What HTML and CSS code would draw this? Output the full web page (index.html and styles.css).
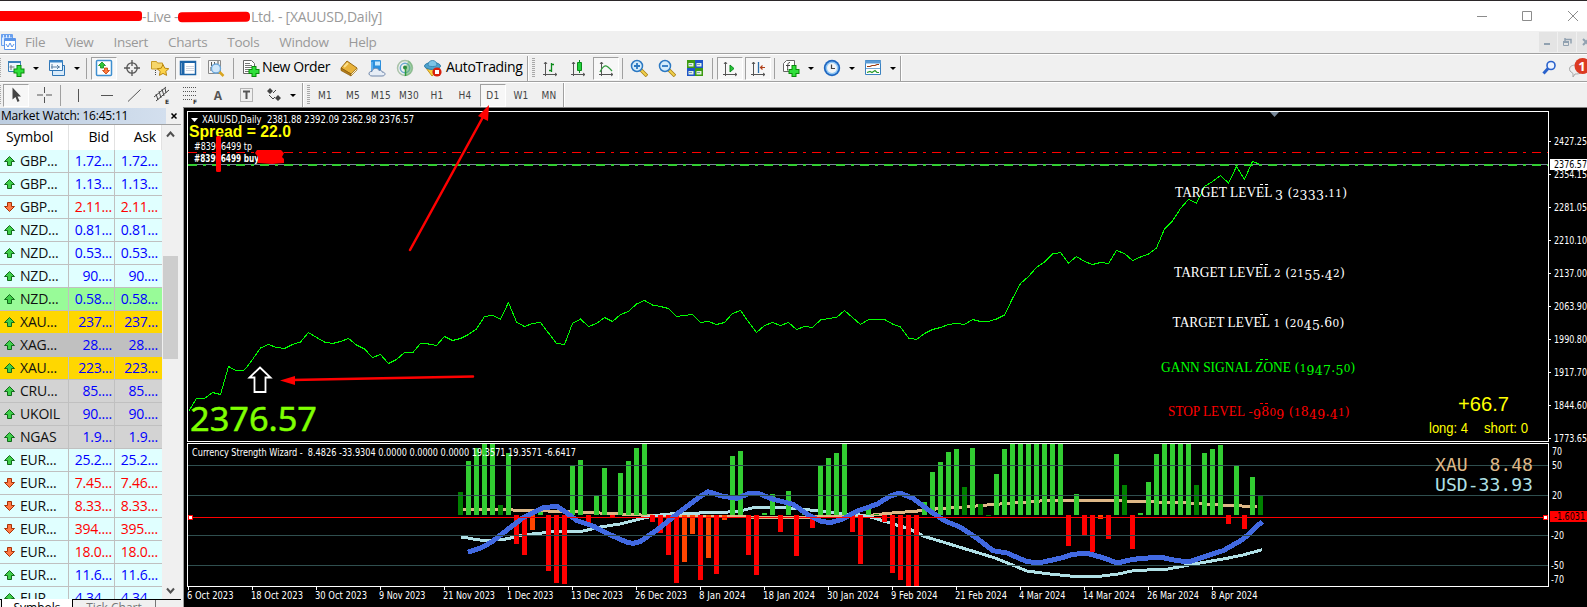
FILE: index.html
```html
<!DOCTYPE html>
<html lang="en">
<head>
    <meta charset="UTF-8">
    <title>XAUUSD,Daily</title>
    <link rel="stylesheet" href="styles.css">
</head>
<body>

    <div class="titlebar">
        <span class="scribble scribble-a"></span>
        <span class="title-live">-Live -</span>
        <span class="scribble scribble-b"></span>
        <span class="title-rest">Ltd. - [XAUUSD,Daily]</span>
        <svg class="win-buttons" width="105" height="20">
            <path d="M2 10.500h10M47.500 5.500h9v9h-9zM93 5l10 10M103 5l-10 10" fill="none" stroke="#8c8c8c"/>
        </svg>
    </div>

    <div class="menubar">
        <svg class="app-icon" width="17" height="18">
            <path d="M1.500 1.500h11v11h-11z" fill="#dcecff" stroke="#6aa0ee"/>
            <path d="M1 3h12" stroke="#6aa0ee" stroke-width="3" stroke-dasharray="2 1"/>
            <path d="M4.500 5.500h11v11h-11z" fill="#fff" stroke="#5b95ea"/>
            <path d="M4 7h12" stroke="#5b95ea" stroke-width="2"/>
            <path d="M6 11l2 3 2-4 2 4 2-3" fill="none" stroke="#5b95ea"/>
        </svg>
        <span>File</span><span>View</span><span>Insert</span><span>Charts</span><span>Tools</span><span>Window</span><span>Help</span>
        <div class="mdi">
            <svg width="18" height="20"><path d="M5 12h6" stroke="#91a1b0" stroke-width="2"/></svg>
            <svg width="18" height="20"><path d="M7 7.500h6v4M7 6v3" stroke="#91a1b0" fill="none" stroke-width="1.500"/><path d="M5.500 9.500h5v4h-5z" stroke="#91a1b0" fill="none"/><path d="M5 10h6" stroke="#91a1b0" stroke-width="2"/></svg>
            <svg width="18" height="20"><path d="M6 7l6 6M12 7l-6 6" stroke="#91a1b0" stroke-width="2"/></svg>
        </div>
    </div>

    <div class="toolbar toolbar-main">
        <i class="grip half"></i>
        <svg class="ic" viewBox="0 0 18 18">
            <path d="M1.500 2.500h12v10h-12z" fill="#eef6fd" stroke="#3a7fb8"/><path d="M1 3h13" stroke="#3a7fb8" stroke-width="2"/>
            <path d="M4 6v5M2.500 8h5" stroke="#777"/>
            <path d="M12 6v12M6.500 12h11" stroke="#0a8a0a" stroke-width="5"/><path d="M12 7v10M7.500 12h9" stroke="#2fe03a" stroke-width="3"/>
        </svg><b class="dd"></b>
        <svg class="ic" viewBox="0 0 18 18">
            <path d="M4.500 6.500h12v10h-12z" fill="#d9ebfa" stroke="#2f75b5"/>
            <path d="M1.500 1.500h13v10h-13z" fill="#f3f9fe" stroke="#2f75b5"/><path d="M1 2.500h14" stroke="#3a86c8" stroke-width="2"/>
            <path d="M4 5v5M3 8h9M9 6l2 2-2 2" fill="none" stroke="#5a7f9f"/>
        </svg><b class="dd"></b>
        <i class="sep first"></i>
        <span class="btn on"><svg class="ic" viewBox="0 0 18 18">
            <rect x="1.500" y="1.500" width="15" height="15" rx="1" fill="#fff" stroke="#3e8fd0" stroke-width="1.500"/>
            <path d="M7 3l3.500 3.500H8.500V9h-3V6.500H3.500z" fill="#2fc83a" stroke="#128a18" stroke-width=".8"/>
            <path d="M11 15l-3.500-3.500H9.500V9h3v2.500h2z" fill="#ff7a3c" stroke="#c43c08" stroke-width=".8"/>
        </svg></span>
        <span class="btn"><svg class="ic" viewBox="0 0 18 18">
            <circle cx="9" cy="9" r="5.200" fill="none" stroke="#555" stroke-width="1.300"/><path d="M9 1v6M9 11v6M1 9h6M11 9h6" stroke="#555" stroke-width="1.300"/>
        </svg></span>
        <span class="btn"><svg class="ic" viewBox="0 0 18 18">
            <path d="M.5 2.500h5l1 1.500h5v6H.5z" fill="#f6d66b" stroke="#c79a26"/><path d="M4.500 11v6" stroke="#444" stroke-dasharray="1 1"/>
            <path d="M12 5.500l1.800 3.700 4 .5-3 2.700.8 4-3.600-2-3.600 2 .8-4-3-2.700 4-.5z" fill="#fcd34a" stroke="#b9860f"/>
        </svg></span>
        <span class="btn on"><svg class="ic" viewBox="0 0 18 18">
            <rect x="1.500" y="2.500" width="15" height="13" fill="#fff" stroke="#1c64a8" stroke-width="1.500"/><path d="M2 3h14" stroke="#1c64a8" stroke-width="2"/>
            <path d="M4 4v11" stroke="#1c64a8" stroke-width="3"/><path d="M7 7.500h8M7 9.500h8M7 11.500h8" stroke="#c3cad8" stroke-width=".8"/>
        </svg></span>
        <span class="btn"><svg class="ic" viewBox="0 0 18 18">
            <path d="M1.500 1.500h12v13h-12z" fill="#f6f6f6" stroke="#8a8a8a"/><path d="M4.500 3v4M7.500 3v3M11 2v3M4 8v4" stroke="#555"/>
            <circle cx="9" cy="9.500" r="4.500" fill="#cfe6fa" stroke="#6aa5d8" stroke-width="1.300"/><path d="M12.500 13l4 4" stroke="#d9a520" stroke-width="2.500"/>
        </svg></span>
        <i class="sep wide"></i>
        <svg class="ic" viewBox="0 0 18 18">
            <path d="M1.500 1.500h8l3 3v10h-11z" fill="#fff" stroke="#666"/><path d="M3 4.500h5M3 6.500h7M3 8.500h7M3 10.500h4M3 12.500h4" stroke="#777"/>
            <path d="M12 7v11M6.500 12.500h11" stroke="#0a8a0a" stroke-width="5"/><path d="M12 8v9M7.500 12.500h9" stroke="#2fe03a" stroke-width="3"/>
        </svg>
        <span class="label label-order">New Order</span>
        <span class="btn"><svg class="ic" viewBox="0 0 18 18">
            <path d="M1 9l6-7 10 7-6 6z" fill="#e8b23a" stroke="#9a6a12"/><path d="M1 9l10 6v2L1 11.500z" fill="#b47d18" stroke="#8a5a0a" stroke-width=".7"/><path d="M11 15l6-6v2l-6 6z" fill="#fff3c8" stroke="#9a6a12" stroke-width=".7"/><path d="M4 8l4-4" stroke="#fbe08b" stroke-width="2"/>
        </svg></span>
        <span class="btn"><svg class="ic" viewBox="0 0 18 18">
            <rect x="3" y="1" width="10" height="11" rx="1" fill="#2d8fdc"/><path d="M7 2.500h5v4H7z" fill="#c6e9ff"/><path d="M4 3v8" stroke="#8fd0ff"/>
            <path d="M4 17c-4 0-4-5 0-4.500.5-4 6-4 7-1 2-1 3 .5 3 1.500 4 0 4 4 0 4z" fill="#e6edf6" stroke="#6f86aa"/>
        </svg></span>
        <span class="btn"><svg class="ic" viewBox="0 0 18 18">
            <circle cx="9" cy="9" r="7.500" fill="none" stroke="#a9c3a9" stroke-width="1.500"/><circle cx="9" cy="9" r="4.700" fill="none" stroke="#6aaad0" stroke-width="1.500"/>
            <path d="M9 9l.5 8c4-.5 7-4 7-8.500 0-3-2-6-4-7" fill="#5fb36a" opacity=".55"/><circle cx="9" cy="8.500" r="2" fill="#2b8a3c"/><path d="M9.500 9v8" stroke="#2f9a3c" stroke-width="1.500"/>
        </svg></span>
        <svg class="ic" viewBox="0 0 18 18">
            <path d="M2 9l6 8 8-7z" fill="#f5cf45" stroke="#c89318"/><ellipse cx="8.500" cy="7" rx="8" ry="3.500" fill="#4ea3cf" stroke="#2f7da8"/><path d="M4 6c0-6 9-6 9 0 0 2-9 2-9 0z" fill="#7cc4e6" stroke="#2f7da8" stroke-width=".8"/>
            <circle cx="13" cy="13" r="4.600" fill="#d8200c"/><path d="M11 11h4v4h-4z" fill="#fff"/>
        </svg>
        <span class="label label-auto">AutoTrading</span>
        <i class="end"></i><i class="grip"></i>
        <span class="btn"><svg class="ic" viewBox="0 0 18 18"><path d="M4.500 3v14M2 15.500h14M3 5l1.500-2L6 5M14 14l2 1.500-2 1.500" fill="none" stroke="#555"/><path d="M10.500 4v9M10 11.500H8M11 5.500h2" stroke="#0a8a1a" stroke-width="1.300"/></svg></span>
        <span class="btn"><svg class="ic" viewBox="0 0 18 18"><path d="M4.500 3v14M2 15.500h14M3 5l1.500-2L6 5M14 14l2 1.500-2 1.500" fill="none" stroke="#555"/><path d="M10.500 1v13" stroke="#0a8a1a"/><path d="M8.500 3.500h4v8h-4z" fill="#22d03a" stroke="#0a8a1a"/></svg></span>
        <span class="btn on"><svg class="ic" viewBox="0 0 18 18"><path d="M4.500 3v14M2 15.500h14M3 5l1.500-2L6 5M14 14l2 1.500-2 1.500" fill="none" stroke="#555"/><path d="M3 13c4-8 6-8 12-1" fill="none" stroke="#2e9a3a" stroke-width="1.200"/></svg></span>
        <i class="sep"></i>
        <span class="btn"><svg class="ic" viewBox="0 0 18 18"><path d="M11 11l6 6" stroke="#a77f14" stroke-width="3.500"/><path d="M11 11l5.500 5.500" stroke="#f0d04c" stroke-width="2"/><circle cx="7" cy="7" r="5.500" fill="#d4ecfb" stroke="#2b78c2" stroke-width="1.500"/><path d="M4 7h6M7 4v6" stroke="#2b78c2" stroke-width="1.800"/></svg></span>
        <span class="btn"><svg class="ic" viewBox="0 0 18 18"><path d="M11 11l6 6" stroke="#a77f14" stroke-width="3.500"/><path d="M11 11l5.500 5.500" stroke="#f0d04c" stroke-width="2"/><circle cx="7" cy="7" r="5.500" fill="#d4ecfb" stroke="#2b78c2" stroke-width="1.500"/><path d="M4 7h6" stroke="#2b78c2" stroke-width="1.800"/></svg></span>
        <span class="btn"><svg class="ic" viewBox="0 0 18 18"><path d="M1 1h8v8H1zM9 9h8v8H9z" fill="#3c9a12"/><path d="M9 1h8v8H9zM1 9h8v8H1z" fill="#1f55c8"/><path d="M2.500 4h5v3.500h-5zM10.500 4h5v3.500h-5zM2.500 12h5v3.500h-5zM10.500 12h5v3.500h-5z" fill="#e4f2e0"/><path d="M3 5.500h3M11 5.500h3M3 13.500h3M11 13.500h3" stroke="#7b9cc0"/></svg></span>
        <i class="sep wide"></i>
        <span class="btn on"><svg class="ic" viewBox="0 0 18 18"><path d="M4.500 3v14M2 15.500h14M3 5l1.500-2L6 5M14 14l2 1.500-2 1.500" fill="none" stroke="#555"/><path d="M9 6l4 3.500L9 13z" fill="#28c83a" stroke="#0a8a1a"/></svg></span>
        <span class="btn on"><svg class="ic" viewBox="0 0 18 18"><path d="M4.500 3v14M2 15.500h14M3 5l1.500-2L6 5M14 14l2 1.500-2 1.500" fill="none" stroke="#555"/><path d="M9.500 3v11" stroke="#2b6ca8" stroke-width="1.300"/><path d="M11 8.500h5M13.500 6.500L11.500 8.500l2 2" fill="none" stroke="#b0401a" stroke-width="1.200"/></svg></span>
        <i class="sep"></i>
        <svg class="ic" viewBox="0 0 18 18">
            <path d="M4.500 1.500h8v11h-11v-8z" fill="#fff" stroke="#666"/><path d="M8 3.500c-3 0-2 3-2.500 8M4 6.500h4" fill="none" stroke="#444"/>
            <path d="M12 6v12M6.500 12.500h11" stroke="#0a8a0a" stroke-width="5"/><path d="M12 7v10M7.500 12.500h9" stroke="#2fe03a" stroke-width="3"/>
        </svg><b class="dd"></b>
        <svg class="ic" viewBox="0 0 18 18">
            <circle cx="9" cy="9" r="8.200" fill="#1e66c0"/><circle cx="9" cy="9" r="6.500" fill="#8ec6f4"/><circle cx="9" cy="9" r="5" fill="#f2f4f6"/><path d="M8.500 5.500V9.500H12" fill="none" stroke="#444" stroke-width="1.200"/>
        </svg><b class="dd"></b>
        <svg class="ic" viewBox="0 0 18 18">
            <path d="M1.500 1.500h15v14h-15z" fill="#fff" stroke="#3c82c0"/><path d="M1 3h16" stroke="#5a9ad4" stroke-width="3"/><path d="M2 9.500h14" stroke="#3c82c0" stroke-width=".7"/>
            <path d="M3 7.500h3l2-1h3l2-1h2" fill="none" stroke="#9a3a10" stroke-width="1.200"/><path d="M3 13.500l3-1 2 1 3-2 2 2h2" fill="none" stroke="#2a9a2a" stroke-width="1.200"/>
        </svg><b class="dd"></b>
        <i class="end last"></i>
        <div class="right-tools">
            <svg width="15" height="16"><circle cx="9" cy="5.500" r="4" fill="#eef4ff" stroke="#2a62cc" stroke-width="1.600"/><path d="M6 8.500l-4.500 5" stroke="#2a62cc" stroke-width="3"/></svg>
            <svg width="23" height="22"><path d="M3 14c-2-5 3-6 6-6h6v7c-2 2-5 2-7 2l-2 3v-3.500z" fill="#eee" stroke="#a8a8a8"/><circle cx="15.500" cy="9" r="8" fill="#dc3a22"/><text x="15" y="13.500" class="badge-text">1</text></svg>
        </div>
    </div>

    <div class="toolbar toolbar-draw">
        <i class="grip half"></i>
        <span class="btn on"><svg class="ic" viewBox="0 0 18 18"><path d="M5.500 1.500v12l3-2.500 2 5 2-1-2-4.500h3.500z" fill="#444"/></svg></span>
        <span class="btn"><svg class="ic" viewBox="0 0 18 18"><path d="M9.500 1v6M9.500 11v6M2 9h6M11 9h6" stroke="#555"/></svg></span>
        <i class="sep first"></i>
        <span class="btn"><svg class="ic" viewBox="0 0 18 18"><path d="M9.500 3v13" stroke="#555"/></svg></span>
        <span class="btn"><svg class="ic" viewBox="0 0 18 18"><path d="M4 9.500h12" stroke="#555"/></svg></span>
        <span class="btn"><svg class="ic" viewBox="0 0 18 18"><path d="M3 15.500L15.500 3.500" stroke="#555"/></svg></span>
        <span class="btn"><svg class="ic" viewBox="0 0 18 18"><path d="M1 11L13 1M3 15L16 4M3 8l2 6M6 5l2 7M9 3l2 7M12 2l1 5" stroke="#444" fill="none"/><text x="12" y="18" class="tiny">E</text></svg></span>
        <span class="btn"><svg class="ic" viewBox="0 0 18 18"><path d="M2 1.500h14M2 5.500h14M2 9.500h14M2 13.500h9" stroke="#555" stroke-dasharray="1 1"/><text x="12" y="18" class="tiny">F</text></svg></span>
        <span class="btn tool-a">A</span>
        <span class="btn"><svg class="ic" viewBox="0 0 18 18"><path d="M3.500 2.500h12v13h-12z" fill="none" stroke="#777" stroke-dasharray="1 1"/><path d="M6 5.500h7M9.500 5v8" stroke="#555" stroke-width="2"/></svg></span>
        <span class="btn"><svg class="ic" viewBox="0 0 18 18"><path d="M5 2l3 3-3 3-3-3zM13 9l3 3-3 3-3-3z" fill="#444"/><path d="M4 9l4 4 2-2M8 7l3-3" fill="none" stroke="#444"/></svg></span>
        <b class="dd near"></b>
        <i class="end"></i><i class="grip"></i>
        <span class="btn tf">M1</span><span class="btn tf">M5</span><span class="btn tf">M15</span><span class="btn tf">M30</span><span class="btn tf">H1</span><span class="btn tf">H4</span><span class="btn tf on">D1</span><span class="btn tf">W1</span><span class="btn tf">MN</span>
        <i class="end last"></i>
    </div>

    <div class="workspace">
        <div class="watch">
            <div class="watch-title"><span>Market Watch: 16:45:11</span><svg width="9" height="9"><path d="M1.500 1.500l5 5M6.500 1.500l-5 5" stroke="#000" stroke-width="1.500"/></svg></div>
            <div class="watch-body">
                <div class="quotes" id="quotes">
                    <div class="head"><span>Symbol</span><span>Bid</span><span>Ask</span></div>
                </div>
                <div class="scroll">
                    <svg width="9" height="7"><path d="M1 5.500l3.500-4 3.500 4" fill="none" stroke="#505050" stroke-width="2"/></svg>
                    <div class="thumb"></div>
                    <svg width="9" height="7"><path d="M1 1.500l3.500 4 3.500-4" fill="none" stroke="#505050" stroke-width="2"/></svg>
                </div>
            </div>
            <div class="tabs"><span class="tab active">Symbols</span><span class="tab">Tick Chart</span></div>
        </div>
        <svg class="chart" id="chart" width="1403" height="499" viewBox="184 108 1403 499"></svg>
    </div>

    <!-- annotation arrow runs from the chart up into the timeframe bar -->
    <svg class="pointer" width="100" height="160" viewBox="400 100 100 160">
        <path d="M410 250L483 117" stroke="#f00" stroke-width="2.500" stroke-linecap="round"/>
        <path d="M489 105l-1 16-10-5z" fill="#f00"/>
    </svg>

    <script src="chart.js"></script>
</body>
</html>
```
FILE: styles.css
```css
body {
    margin: 0;
    width: 1587px;
    height: 607px;
    overflow: hidden;
    position: relative;
    background: #f0f0f0;
    font-family: "Open Sans", "Noto Sans", sans-serif;
    color: #000;
}

svg {
    display: block;
    flex: none;
}

.titlebar {
    box-sizing: border-box;
    height: 31px;
    border-top: 1px solid #2b2729;
    background: #fff;
    display: flex;
    align-items: center;
    font-size: 14px;
    color: #999;
    white-space: nowrap;
}

.title-live {
    width: 36px;
    letter-spacing: -0.3px;
}

.title-rest {
    letter-spacing: -0.25px;
}

.scribble {
    background: #f00;
    flex: none;
}

.scribble-a {
    width: 142px;
    height: 10px;
    border-radius: 0 3px 3px 0;
}

.scribble-b {
    width: 72px;
    height: 10px;
    border-radius: 4px;
    margin: 1px 1px 0 0;
    transform: rotate(-0.5deg);
}

.win-buttons {
    margin-left: auto;
    margin-right: 7px;
}

.menubar {
    height: 22px;
    display: flex;
    align-items: center;
    gap: 20px;
    border-bottom: 1px solid #a0a0a0;
    font-size: 13.5px;
    letter-spacing: -0.3px;
    color: #999;
}

.app-icon {
    margin-right: -12px;
}

.mdi {
    margin-left: auto;
    margin-right: -8px;
    display: flex;
    gap: 1px;
}

.mdi svg {
    background: #e4e4e4;
}

.toolbar {
    box-sizing: border-box;
    height: 27px;
    display: flex;
    align-items: center;
    border-top: 1px solid #fff;
}

.ic {
    width: 18px;
    height: 18px;
    margin: 0 5px;
}

.btn {
    box-sizing: border-box;
    width: 28px;
    height: 25px;
    flex: none;
    display: flex;
    align-items: center;
    justify-content: center;
}

.btn .ic {
    margin: 0;
}

.btn.on {
    width: 26px;
    height: 23px;
    margin: 0 1px;
    background: #f7f7f7;
    border: 1px solid #fff;
    border-top-color: #a0a0a0;
    border-left-color: #a0a0a0;
}

.dd {
    width: 0;
    border: 3px solid transparent;
    border-top-color: #000;
    border-bottom: 0;
    margin: 0 2px 0 3px;
    flex: none;
}

.toolbar-main .dd {
    margin-right: 4px;
}

.dd.near {
    margin: 0 6px 0 2px;
}

.sep {
    width: 1px;
    height: 21px;
    background: #a0a0a0;
    margin: 0 2px;
    flex: none;
}

.sep.first {
    margin: 0 3px 0 2px;
}

.sep.wide {
    margin: 0 3px;
}

.end {
    width: 1px;
    height: 25px;
    background: #a0a0a0;
    border-right: 1px solid #fff;
    flex: none;
}

.grip {
    width: 3px;
    height: 20px;
    margin: 0 1px 0 3px;
    background: repeating-linear-gradient(#a8a8a8 0 1px, #f0f0f0 1px 2px);
    flex: none;
}

.grip.half {
    width: 1px;
    margin: 0 1px 0 0;
}

.toolbar-main .label {
    font-size: 14px;
    line-height: 20px;
    padding-bottom: 3px;
    white-space: nowrap;
    flex: none;
}

.label-order {
    width: 73px;
    letter-spacing: -0.4px;
    margin-left: -3px;
}

.label-auto {
    width: 81px;
    letter-spacing: -0.35px;
    margin-left: -1px;
}

.right-tools {
    margin-left: auto;
    display: flex;
    align-items: center;
    gap: 10px;
    margin-right: -3px;
}

.badge-text {
    font: bold 13px "Open Sans", sans-serif;
    fill: #fff;
    text-anchor: middle;
}

.toolbar-draw {
    border-top: 1px solid #a0a0a0;
    box-shadow: inset 0 1px #fff;
}

.tiny {
    font: bold 6px "DejaVu Sans", sans-serif;
    fill: #333;
}

.tool-a {
    font: bold 12px "Open Sans", sans-serif;
    color: #555;
}

.tf {
    font: 10px "DejaVu Sans Condensed", "DejaVu Sans", sans-serif;
    letter-spacing: 0.3px;
    color: #444;
}

.workspace {
    display: flex;
    height: 499px;
}

.watch {
    width: 181px;
    height: 499px;
    overflow: hidden;
    border-right: 2px solid #f0f0f0;
}

.watch-title {
    height: 16px;
    border-bottom: 1px solid #a0a0a0;
    display: flex;
    align-items: center;
    font-size: 12px;
    line-height: 16px;
    letter-spacing: -0.2px;
}

.watch-title span {
    width: 165px;
    padding-left: 1px;
    margin-right: 4px;
    background: linear-gradient(90deg, #bccde0, #d3dfee);
}

.watch-body {
    display: flex;
    height: 474px;
    overflow: hidden;
}

.quotes {
    width: 162px;
    flex: none;
    background: #fff;
    overflow: hidden;
}

.head,
.row {
    display: grid;
    grid-template-columns: 69px 46px 47px;
    font-size: 14px;
    letter-spacing: -0.2px;
    white-space: nowrap;
}

.head {
    height: 25px;
    line-height: 24px;
}

.head span {
    border-right: 1px solid #e2e2e2;
    text-align: right;
    padding-right: 5px;
}

.head span:first-child {
    text-align: left;
    padding: 0 0 0 6px;
}

.row {
    height: 22px;
    line-height: 22px;
    border-bottom: 1px solid #c0c0c0;
    background: #e0ffff;
    color: #00f;
}

.row.down {
    color: #f00;
}

.row.pale {
    background: #98fb98;
}

.row.gold {
    background: #ffd700;
}

.row.silver {
    background: #c0c0c0;
}

.row.gray {
    background: #d3d3d3;
}

.row span {
    border-right: 1px solid #c0c0c0;
    text-align: right;
    padding-right: 2px;
}

.row span:last-child {
    border-right: 0;
    padding-right: 4px;
}

.row .sym {
    display: flex;
    align-items: center;
    gap: 5px;
    padding-left: 4px;
    color: #111;
}

.scroll {
    width: 17px;
    padding: 6px 0 5px;
    display: flex;
    flex-direction: column;
    align-items: center;
    background: #f0f0f0;
}

.thumb {
    width: 15px;
    height: 103px;
    margin: 118px 0 auto;
    background: #cdcdcd;
}

.tabs {
    display: flex;
    border-top: 1px solid #000;
    font-size: 12px;
    line-height: 16px;
    color: #777;
}

.tab {
    width: 82px;
    text-align: center;
    border-right: 1px solid #777;
}

.tab.active {
    width: 70px;
    margin-top: -1px;
    padding-top: 1px;
    border-left: 1px solid #000;
    border-right: 1px solid #000;
    margin-left: 1px;
    background: #fff;
    color: #000;
}

.chart {
    background: #000;
    border-left: 1px solid #a0a0a0;
    box-shadow: 0 -1px #808080;
}

.chart text {
    font-family: "DejaVu Sans Condensed", "DejaVu Sans", sans-serif;
    font-size: 10px;
    fill: #fff;
    white-space: pre;
}

.chart .arial {
    font-family: "Liberation Sans", sans-serif;
    fill: #ff0;
}

.chart .level {
    font-family: "Liberation Serif", serif;
    font-size: 15px;
}

.chart .figures {
    font-family: "DejaVu Serif", serif;
    font-size: 12.5px;
    letter-spacing: 0.25px;
}

.chart .small {
    font-size: 10.5px;
}

.chart .mono {
    font-family: "DejaVu Sans Mono", monospace;
    font-size: 18px;
}

.chart .price {
    font-family: "Noto Sans", sans-serif;
    font-size: 33.5px;
    fill: #7fff00;
    stroke: #7fff00;
    stroke-width: 0.5px;
}

.pointer {
    position: absolute;
    left: 400px;
    top: 100px;
}
```
FILE: chart.js
```js
// ---- market watch ----
const quotes = [
    ['GBP...', '1.72...', '1.72...', 'up', ''],
    ['GBP...', '1.13...', '1.13...', 'up', ''],
    ['GBP...', '2.11...', '2.11...', 'down', ''],
    ['NZD...', '0.81...', '0.81...', 'up', ''],
    ['NZD...', '0.53...', '0.53...', 'up', ''],
    ['NZD...', '90....', '90....', 'up', ''],
    ['NZD...', '0.58...', '0.58...', 'up', 'pale'],
    ['XAU...', '237...', '237...', 'up', 'gold'],
    ['XAG...', '28....', '28....', 'up', 'silver'],
    ['XAU...', '223...', '223...', 'up', 'gold'],
    ['CRU...', '85....', '85....', 'up', 'gray'],
    ['UKOIL', '90....', '90....', 'up', 'gray'],
    ['NGAS', '1.9...', '1.9...', 'up', 'gray'],
    ['EUR...', '25.2...', '25.2...', 'up', ''],
    ['EUR...', '7.45...', '7.46...', 'down', ''],
    ['EUR...', '8.33...', '8.33...', 'down', ''],
    ['EUR...', '394....', '395....', 'down', ''],
    ['EUR...', '18.0...', '18.0...', 'down', ''],
    ['EUR...', '11.6...', '11.6...', 'up', ''],
    ['EUR...', '4.34...', '4.34...', 'up', '']
];

const arrows = {
    up: '<svg width="11" height="12"><path d="M5.500 1.500l5 5H7.500v4h-4v-4H.5z" fill="#3fcf4a" stroke="#116a1a"/></svg>',
    down: '<svg width="11" height="12"><path d="M5.500 10.500l-5-5H3.500v-4h4v4h3z" fill="#ff7a45" stroke="#a83208"/></svg>'
};

document.getElementById('quotes').innerHTML += quotes.map(q =>
    `<div class="row ${q[3]} ${q[4]}"><span class="sym">${arrows[q[3]]}${q[0]}</span><span>${q[1]}</span><span>${q[2]}</span></div>`
).join('');

// ---- chart ----
let out = '';

function line(x1, y1, x2, y2, color, extra = '') {
    out += `<path d="M${x1} ${y1}L${x2} ${y2}" stroke="${color}" ${extra}/>`;
}

function rect(x, y, w, h, fill) {
    out += `<rect x="${x}" y="${y}" width="${w}" height="${h}" fill="${fill}" shape-rendering="crispEdges"/>`;
}

function text(x, y, str, width, attrs = '') {
    const len = width ? `textLength="${width}" lengthAdjust="spacingAndGlyphs"` : '';
    out += `<text x="${x}" y="${y}" ${len} ${attrs}>${str}</text>`;
}

// series given as flat "x,y" lists
function poly(points, color, width) {
    out += `<polyline points="${points}" fill="none" stroke="${color}" stroke-width="${width}" stroke-linejoin="round" shape-rendering="crispEdges"/>`;
}

// old-style figures: 0-2 at x-height, 3 4 5 7 9 below the baseline
function oldStyle(str) {
    let html = '', shift = 0;
    for (const c of str) {
        const dy = '34579'.includes(c) ? 3 : 0;
        const size = '012'.includes(c) ? 'class="small"' : '';
        html += dy - shift || size ? `<tspan dy="${dy - shift}" ${size}>${c}</tspan>` : c;
        shift = dy;
    }
    return html;
}

// close price, one value per 8px bar
const closes = [411.5, 398.5, 398.5, 392.5, 394.5, 366.5, 371, 370, 359.5, 348, 344.5, 347.5, 348.5, 344.5, 342, 332.5, 337.5, 342, 343.5, 341.5, 338.5, 345, 349, 357.5, 354.5, 363.5, 359.5, 352.5, 353, 343.5, 344, 345.5, 336.5, 340.5, 338.5, 334.5, 329, 316.5, 315.5, 319, 302.5, 322, 326.5, 323.5, 322.5, 333, 343.5, 344.5, 323.5, 319, 326.5,
    323.5, 317.5, 321.5, 314.5, 311.5, 304, 300.5, 305, 306.5, 308.5, 316.5, 315.5, 314.5, 322.5, 321.5, 324.5, 322.5, 313.5, 310.5, 322, 332.5, 325.5, 322.5, 325.5, 322.5, 329.5, 326.5, 327.5, 320, 318.5, 317.5, 310.5, 317.5, 324.5, 319.5, 319.5, 319.5, 324, 327, 338, 339.5, 333.5, 329.5, 327.5, 324.5, 323.5, 324.5, 319.5, 321.5, 321.5, 319, 315,
    298.5, 283.5, 276.5, 267.5, 262, 254, 252.5, 263, 256.5, 261.5, 264.5, 262.5, 263.5, 250.5, 253.5, 260.5, 257, 254, 248, 229, 221, 208.5, 199.5, 203, 186.5, 181.5, 175.5, 183, 166.5, 179.5, 161.5, 164.5];

// order and price levels
out += '<g shape-rendering="crispEdges" fill="none">';
line(188, 152.5, 1548, 152.5, '#f00', 'stroke-dasharray="9 6 3 6"');
line(188, 164.5, 1548, 164.5, '#778899');
line(188, 165, 1548, 165, '#32cd32', 'stroke-width="2" stroke-dasharray="9 6 3 6"');
out += '</g>';
poly(closes.map((y, i) => (188.5 + i * 8) + ',' + y), '#0f0', 1);

// histogram: g green, d dark green, r red, o orange, then the y it reaches
const bars = 'd492 g461 g448 g444 g444 d505 g453 r544 r555 o530 g512 r571 r583 r584 g466 g460 r524 g496 g468 r518 g473 g461 g448 g444 r522 r533 r555 r583 o562 o534 r580 o558 r574 o520 g456 g451 r555 r575 g513 g494 r532 g491 r556 g513 r528 g466 g458 g453 g444 r532 r564 g507 d514 r522 r573 r580 r586 r586 g502 g472 g462 g452 g449 d487 g448 d504 d516 g474 g449 g444 g444 g444 g444 g444 g444 g444 r546 g494 r535 r552 o519 r539 g454 d485 r549 g513 g482 g454 g444 g444 g444 g444 d485 g453 g449 g445 r524 g466 r529 g477 d496';
const barColors = { g: '#32cd32', d: '#008000', r: '#f00', o: '#ff4500' };

poly('463,510 505,509.5 520,510.5 575,511.5 600,513 632,514.5 650,515.5 700,516 745,516 752,517.3 812,517 840,516.5 873,515 897,512.5 913,511.5 940,508.5 970,506.5 993,504.5 1020,502.5 1040,501 1067,500.5 1120,500.5 1127,501.5 1150,501.5 1160,502.5 1187,503 1213,504.5 1227,505.5 1257,506.5', '#deb887', 3);
poly('461,537 468,538 477,539.7 487,540.7 503,539.5 512,537.7 523,535 545,532.7 553,531.7 582,531.3 600,527 620,524 640,519 653,516 663,514.5 680,513.3 720,512.7 740,511 755,507.3 790,508 813,510.3 840,513.7 860,515 873,517.7 890,523 910,529 923,536 947,543.3 970,550.3 993,557.3 1007,562.7 1027,571 1047,573.7 1073,576.3 1100,576.3 1120,573.7 1133,570.7 1168,569 1193,564.3 1227,558.3 1243,555 1262,549.7', '#b0e0e6', 3);

bars.split(' ').forEach((b, i) => {
    const y = Number(b.slice(1));
    rect(458 + i * 8, Math.min(y, 515), 5, Math.max(Math.abs(y - 515), 1), barColors[b[0]]);
});

poly('468,552.3 483,547 493,541 507,530 523,517.7 543,507.7 557,506.3 565,511.7 577,520.7 593,526 607,533.3 627,542.3 633,543.3 640,541.7 657,530 680,511.7 700,496.7 708,491.7 723,496.3 737,498.3 750,493 760,494 773,499.3 793,504.3 807,514 820,521 830,522.7 843,519 857,511 877,504.3 890,496 900,493 913,498.3 930,511 945,521 960,527 977,538.3 993,550.7 1007,553 1027,561.7 1040,562.7 1060,558.3 1073,554.3 1087,553.3 1103,557.7 1117,563 1133,559.3 1160,557 1177,560.7 1190,561.7 1207,555.7 1223,550.7 1243,539.3 1262,521.7', '#4169e1', 5);

out += '<g shape-rendering="crispEdges">';
[465.5, 495.5, 535.5, 565.5].forEach(y => line(188, y, 1548, y, '#2f4f4f'));
line(188, 517.5, 1548, 517.5, '#f00');
[188, 1543].forEach(x => {
    rect(x, 515, 5, 5, '#f00');
    rect(x + 1, 516, 3, 3, '#fff');
});
out += '<path d="M187.500 111.500H1548.500V441.500H187.500zM187.500 443.500H1548.500V586.500H187.500z" fill="none" stroke="#fff"/></g>';
out += '<path d="M1270 112h9l-4.500 5z" fill="#778899"/>';

// price scale
['2427.25', '2354.15', '2281.05', '2210.10', '2137.00', '2063.90', '1990.80', '1917.70', '1844.60', '1773.65'].forEach((p, i) => {
    const y = 141.5 + i * 33;
    line(1549, y, 1551, y, '#fff');
    text(1554, y + 3.5, p, 33);
});
rect(1550, 159, 37, 11, '#fff');
text(1554, 168, '2376.57', 33, 'style="fill:#000"');

[['70', 451], ['50', 465.5], ['20', 495.5], ['-20', 535.5], ['-50', 565.5], ['-70', 579.5]].forEach(([s, y]) => {
    text(s.length > 2 ? 1551 : 1552, y + 3.5, s, s.length > 2 ? 13 : 10);
});
rect(1550, 511, 37, 11, '#f00');
text(1554, 520, '-1.6031', 31, 'style="fill:#000"');

// time scale
['6 Oct 2023', '18 Oct 2023', '30 Oct 2023', '9 Nov 2023', '21 Nov 2023', '1 Dec 2023', '13 Dec 2023', '26 Dec 2023', '8 Jan 2024', '18 Jan 2024', '30 Jan 2024', '9 Feb 2024', '21 Feb 2024', '4 Mar 2024', '14 Mar 2024', '26 Mar 2024', '8 Apr 2024'].forEach((d, i) => {
    const x = 188 + i * 64;
    line(x + .5, 587, x + .5, 590, '#fff');
    text(x - 1, 599, d, d.length > 10 ? 52 : 46.5);
});

// captions
out += '<path d="M191 118h7l-3.500 4z" fill="#fff"/>';
text(202, 123, 'XAUUSD,Daily  2381.88 2392.09 2362.98 2376.57', 212);
text(189, 137, 'Spread = 22.0', 102, 'class="arial" style="font-size:16px;font-weight:bold"');
text(194, 150, '#83996499 tp', 58);
text(194, 162, '#83996499 buy', 65, 'style="font-weight:bold"');
text(192, 456, 'Currency Strength Wizard -  8.4826 -33.9304 0.0000 0.0000 0.0000 19.3571 19.3571 -6.6417', 384);
text(190, 431, '2376.57', 127, 'class="price"');

// gann levels: caption, then its figures
[[1175, 197, 'TARGET LEVEL', 97.5, 1275, '3 (2333.11)', '#fff', 184.5],
 [1174, 277, 'TARGET LEVEL', 97.5, 1274, '2 (2155.42)', '#fff', 264.5],
 [1172.5, 327, 'TARGET LEVEL', 97.5, 1273.5, '1 (2045.60)', '#fff', 314.5],
 [1161, 372, 'GANN SIGNAL ZONE', 130, 1294.5, '(1947.50)', '#0f0', 359.5],
 [1168, 416, 'STOP LEVEL', 77, 1248.5, '-9809 (1849.41)', '#f00', 403.5]].forEach(([x, y, s, w, fx, fig, c, dots]) => {
    text(x, y, s, w, `class="level" style="fill:${c}"`);
    text(fx, y, oldStyle(fig), 0, `class="figures" style="fill:${c}"`);
    line(1260, dots, 1263, dots, c);
    line(1265, dots, 1268, dots, c);
});

text(1458, 411, '+66.7', 51, 'class="arial" style="font-size:20px"');
text(1429, 433, 'long: 4', 39, 'class="arial" style="font-size:14px"');
text(1484, 433, 'short: 0', 44, 'class="arial" style="font-size:14px"');
text(1435, 471, 'XAU  8.48', 98, 'class="mono" style="fill:#deb887"');
text(1435, 491, 'USD-33.93', 98, 'class="mono" style="fill:#b0e0e6"');

// hand-drawn marks
out += '<rect x="216" y="136" width="5" height="36" rx="1.500" fill="#f00"/>';
out += '<path d="M257 150h24l3 3-2 4 2 2v4l-12 1-14-1v-6l-3-4z" fill="#f00"/>';
line(473, 376.500, 292, 380, '#f00', 'stroke-width="2.500" stroke-linecap="round"');
out += '<path d="M280 380.500l15-4.500v9z" fill="#f00"/>';
out += '<path d="M260 367.500l10.500 10h-5v14.500h-11v-14.500h-5z" fill="none" stroke="#fff" stroke-width="1.800"/>';

document.getElementById('chart').innerHTML = out;
```
